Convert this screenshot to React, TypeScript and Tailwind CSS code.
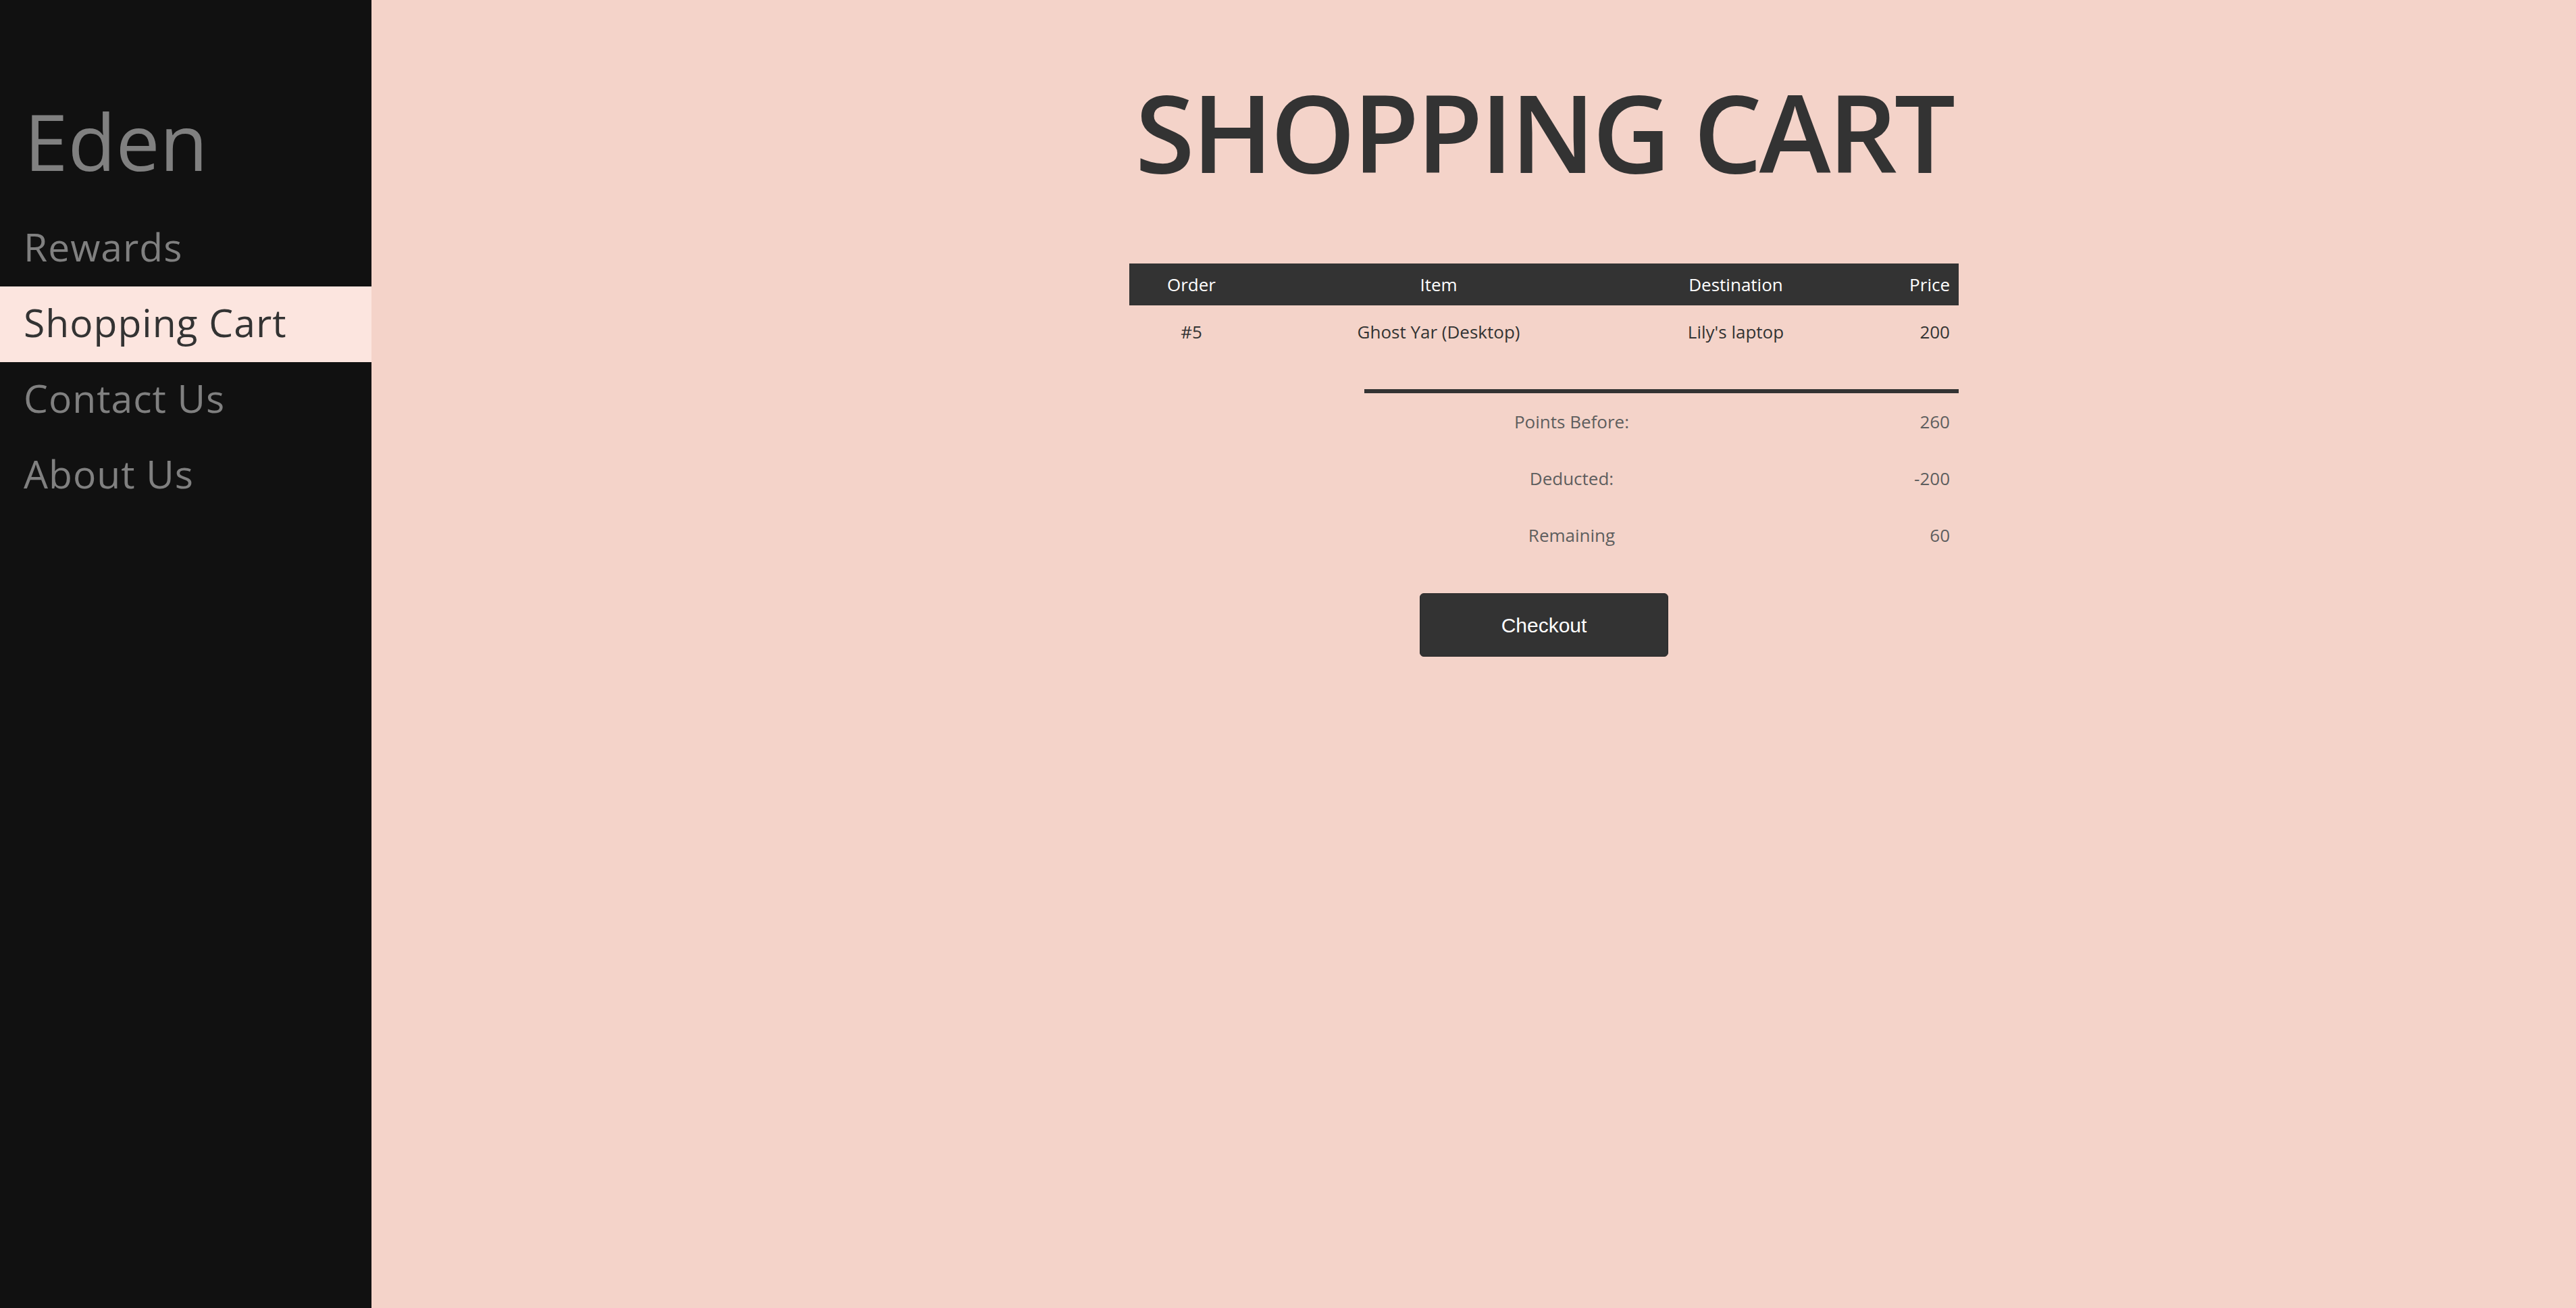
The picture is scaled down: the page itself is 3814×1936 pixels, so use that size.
const nav = ['Rewards', 'Shopping Cart', 'Contact Us', 'About Us'];

const summary = [
  { label: 'Points Before:', value: '260' },
  { label: 'Deducted:', value: '-200' },
  { label: 'Remaining', value: '60' },
];

export default function App() {
  return (
    <div className="flex h-screen w-full bg-[#f4d3c9] font-['Open_Sans',sans-serif]">
      {/* Sidebar */}
      <aside className="w-[550px] shrink-0 bg-[#111111] h-full">
        <div className="pt-[150px] pl-[36px] h-[312px] text-[116px] leading-none text-[#808080]">Eden</div>
        <nav className="flex flex-col">
          {nav.map((n) => (
            <div
              key={n}
              className={
                n === 'Shopping Cart'
                  ? 'h-[112px] flex items-center pb-[4px] pl-[35px] text-[57px] tracking-[1px] bg-[#fce5df] text-[#333333]'
                  : 'h-[112px] flex items-center pb-[4px] pl-[35px] text-[57px] tracking-[1px] text-[#808080]'
              }
            >
              {n}
            </div>
          ))}
        </nav>
      </aside>

      {/* Main */}
      <main className="flex-1 pl-[1122px]">
        <div className="w-[1228px] flex flex-col">
          <h1 className="pt-[114px] h-[390px] text-[160px] leading-none font-semibold text-[#333333] text-center whitespace-nowrap tracking-[-4px]">
            SHOPPING CART
          </h1>

          <table className="w-full text-[26px] text-[#333333]">
            <thead>
              <tr className="bg-[#333333] text-white h-[62px]">
                <th className="font-medium w-[184px]">Order</th>
                <th className="font-medium w-[548px]">Item</th>
                <th className="font-medium w-[332px]">Destination</th>
                <th className="font-medium text-right pr-[13px]">Price</th>
              </tr>
            </thead>
            <tbody>
              <tr className="h-[72px]">
                <td className="text-center pt-[6px]">#5</td>
                <td className="text-center pt-[6px]">Ghost Yar (Desktop)</td>
                <td className="text-center pt-[6px]">Lily's laptop</td>
                <td className="text-right pr-[13px] pt-[6px]">200</td>
              </tr>
            </tbody>
          </table>

          <div className="ml-[348px] mt-[52px] border-t-[6px] border-[#333333]">
            {summary.map((s) => (
              <div key={s.label} className="flex h-[84px] items-center text-[26px] text-[#5e5e5e]">
                <div className="w-[614px] text-center">{s.label}</div>
                <div className="flex-1 text-right pr-[13px]">{s.value}</div>
              </div>
            ))}
          </div>

          <button className="self-center mt-[44px] w-[368px] h-[94px] rounded-[6px] bg-[#333333] text-white text-[30px] font-['Liberation_Sans',sans-serif] border border-[#2a2a2a]">
            Checkout
          </button>
        </div>
      </main>
    </div>
  );
}
